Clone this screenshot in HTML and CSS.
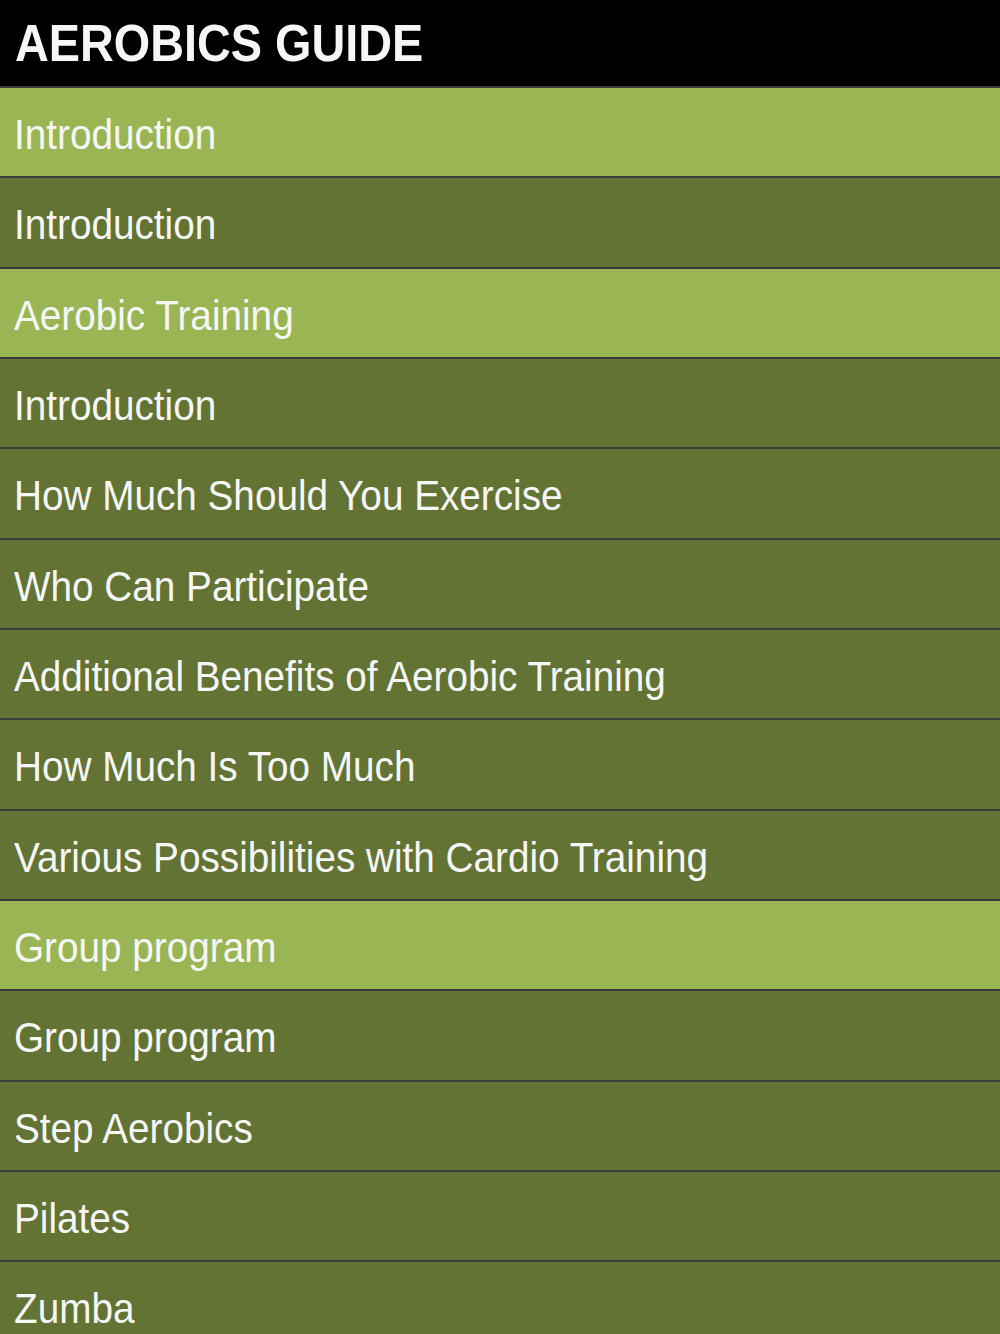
FILE: index.html
```html
<!DOCTYPE html>
<html>
<head>
<meta charset="utf-8">
<link rel="stylesheet" href="styles.css">
</head>
<body>
<div class="app">
  <header class="header"><span class="title">AEROBICS GUIDE</span></header>
  <ul class="menu">
    <li class="item section"><span class="label">Introduction</span></li>
    <li class="item"><span class="label">Introduction</span></li>
    <li class="item section"><span class="label">Aerobic Training</span></li>
    <li class="item"><span class="label">Introduction</span></li>
    <li class="item"><span class="label">How Much Should You Exercise</span></li>
    <li class="item"><span class="label">Who Can Participate</span></li>
    <li class="item"><span class="label">Additional Benefits of Aerobic Training</span></li>
    <li class="item"><span class="label">How Much Is Too Much</span></li>
    <li class="item"><span class="label">Various Possibilities with Cardio Training</span></li>
    <li class="item section"><span class="label">Group program</span></li>
    <li class="item"><span class="label">Group program</span></li>
    <li class="item"><span class="label">Step Aerobics</span></li>
    <li class="item"><span class="label">Pilates</span></li>
    <li class="item"><span class="label">Zumba</span></li>
  </ul>
</div>
</body>
</html>
```

FILE: styles.css
```css
html, body {
  margin: 0;
  padding: 0;
  background: #627333;
  overflow: hidden;
}
.app {
  width: 1000px;
  font-family: "Liberation Sans", Arial, sans-serif;
  color: #f6f6f6;
}
.header {
  height: 85px;
  padding-top: 1px;
  background: #000;
  border-bottom: 2px solid #3c3c3c;
  display: flex;
  align-items: center;
  padding-left: 15px;
}
.title {
  font-weight: bold;
  font-size: 52px;
  line-height: 85px;
  display: inline-block;
  transform: scaleX(0.9);
  transform-origin: left center;
  white-space: nowrap;
}
.menu {
  list-style: none;
  margin: 0;
  padding: 0;
}
.item {
  height: 84.33px;
  padding-top: 4px;
  border-bottom: 2px solid #3a3a3a;
  background: #627333;
  display: flex;
  align-items: center;
  padding-left: 14px;
}
.item.section {
  background: #9ab654;
}
.label {
  font-size: 43px;
  line-height: 84px;
  display: inline-block;
  transform: scaleX(0.9);
  transform-origin: left center;
  white-space: nowrap;
}
```
